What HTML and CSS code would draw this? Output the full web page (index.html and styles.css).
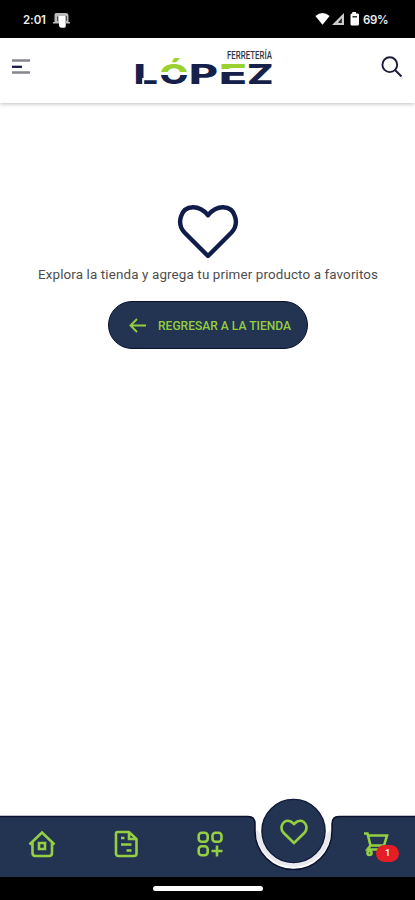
FILE: index.html
```html
<!DOCTYPE html>
<html lang="es">
<head>
<meta charset="utf-8">
<meta name="viewport" content="width=device-width, initial-scale=1">
<title>Favoritos</title>
<link rel="stylesheet" href="styles.css">
</head>
<body>
<div class="app">
  <div class="status">
    <span class="time">2:01</span>
    <svg class="notice" width="18" height="18" viewBox="0 0 18 18"><path d="M3 1H13Q15.500 1 15.500 4V10H17V11.500H13V14Q13 16 11 16H9Q6 16 6 13V11.500H0V10H1.500V3Q1.500 1 3 1Z" fill="#bbb"/><path d="M6 4H12V15H8Q6 15 6 12Z" fill="#fff"/><path d="M4.500 9V4.500M13.500 9V4" stroke="#555" fill="none"/></svg>
    <svg class="signals" width="46" height="15" viewBox="0 0 46 15"><path d="M.4 4Q7.500-1.800 14.600 4L7.500 12.800Z" fill="#fff"/><path d="M17 13L29 1V13Z" fill="#ccc"/><path d="M23.500 10L26.800 6V11H23.500Z" fill="#222"/><path d="M37.500 0H41V1.500H43Q44 1.500 44 3V12Q44 13.500 42.500 13.500H37Q35.500 13.500 35.500 12V3Q35.500 1.500 37 1.500Z" fill="#fff"/><path d="M37.500 4H42V5.500H37.500Z" fill="#333"/></svg>
    <span class="percent">69%</span>
  </div>

  <header class="header">
    <svg class="menu" width="18" height="16" viewBox="0 0 18 16"><path d="M0 1.500H18M0 13.500H18" stroke="#87878c" stroke-width="2.400"/><path d="M0 7.800H10" stroke="#11163d" stroke-width="2.200"/></svg>
    <svg class="logo" width="138" height="40" viewBox="0 0 138 40">
      <defs>
        <linearGradient id="o" gradientUnits="userSpaceOnUse" x1="0" y1="8" x2="0" y2="37">
          <stop offset=".56" stop-color="#9bd12f"/><stop offset=".56" stop-color="#fff"/><stop offset=".66" stop-color="#fff"/><stop offset=".66" stop-color="#171f4b"/>
        </linearGradient>
        <linearGradient id="e" gradientUnits="userSpaceOnUse" x1="0" y1="16" x2="0" y2="36">
          <stop offset=".25" stop-color="#9bd12f"/><stop offset=".25" stop-color="#fff"/><stop offset=".38" stop-color="#fff"/><stop offset=".38" stop-color="#171f4b"/>
        </linearGradient>
      </defs>
      <text class="over" x="92" y="10.500" textLength="45" lengthAdjust="spacingAndGlyphs">FERRETERÍA</text>
      <g class="word">
        <text x="-1.500" y="36" textLength="24.500" lengthAdjust="spacingAndGlyphs">L</text>
        <text x="24.500" y="36" textLength="29" lengthAdjust="spacingAndGlyphs" fill="url(#o)">Ó</text>
        <text x="54" y="36" textLength="29" lengthAdjust="spacingAndGlyphs">P</text>
        <text x="84" y="36" textLength="28" lengthAdjust="spacingAndGlyphs" fill="url(#e)">E</text>
        <text x="112" y="36" textLength="26.500" lengthAdjust="spacingAndGlyphs">Z</text>
      </g>
      <path d="M8.200 30V37" stroke="#fff" stroke-width="2"/>
    </svg>
    <svg class="search" width="22" height="22" viewBox="0 0 22 22" fill="none" stroke="#1b1b3b" stroke-width="1.900"><circle cx="8.800" cy="8.700" r="7.400"/><path d="M14 14L20.500 20.500"/></svg>
  </header>

  <main class="empty">
    <svg class="bigheart" width="62" height="56" viewBox="1 0 62 56"><path d="M32 52L8.500 28.500C.5 20 4 3.500 17 3.300C24 3.200 28 6.500 32 11.200C36 6.500 40 3.200 47 3.300C60 3.500 63.500 20 55.500 28.500Z" fill="none" stroke="#101d4a" stroke-width="4.400" stroke-linejoin="round"/></svg>
    <p class="message"><svg width="342" height="20"><text x="1" y="14.500" textLength="340">Explora la tienda y agrega tu primer producto a favoritos</text></svg></p>
    <a class="back">
      <svg width="17" height="15" viewBox="0 0 17 15" fill="none" stroke="#93cf3c" stroke-width="1.900"><path d="M17 7.500H1.500M8 1L1.500 7.500L8 14"/></svg>
      <svg class="label" width="138" height="18"><text x="0" y="13.500" textLength="133" lengthAdjust="spacingAndGlyphs">REGRESAR A LA TIENDA</text></svg>
    </a>
  </main>

  <nav class="nav">
    <svg class="shape" width="415" height="79" viewBox="0 0 415 79">
      <path d="M0 18H248Q255 18 255 26V33A38.500 38.500 0 0 0 332 33V26Q332 18 339 18H415V79H0Z" fill="#233453"/>
      <path d="M255.500 31A38 38 0 0 0 331.500 31L327 35A34 34 0 0 1 260 35Z" fill="#e9e8ee"/>
      <path d="M0 18.500H248Q255 18.500 255 26V33A38.500 38.500 0 0 0 332 33V26Q332 18.500 339 18.500H415" fill="none" stroke="#0b122d" stroke-width="1.500"/>
      <circle cx="293.500" cy="33" r="31.600" fill="#233453" stroke="#101a3b" stroke-width="1.400"/>
    </svg>
    <div class="items">
      <svg width="28" height="28" viewBox="0 0 28 28"><path d="M1.500 14.500L14 2.500L26.500 14.500M4.500 12V23Q4.500 26 7.500 26H21Q24 26 24 23V12M11 13H17V19H11Z"/></svg>
      <svg width="28" height="28" viewBox="0 0 28 28"><path d="M5.500 2H17L24.500 9V23.500Q24.500 26 22 26H6.500Q4 26 4 23.500V4Q4 2 5.500 2ZM17 2V9H24M9 8H12.500M9 14.500H19.500M14.500 20.500H19.500"/></svg>
      <svg width="28" height="28" viewBox="0 0 28 28"><rect x="2.700" y="2.700" width="9" height="9" rx="3"/><rect x="16.500" y="2.700" width="9" height="9" rx="3"/><rect x="2.700" y="16.300" width="9" height="9" rx="3"/><path d="M21 15.500V26.500M15.500 21H26.500"/></svg>
      <svg class="fav" width="28" height="26" viewBox="0 0 28 26"><path d="M14 24L3.500 13.800C-1 8.500 3 1.800 8 1.800C11 1.800 12.500 3.500 14 5C15.500 3.500 17 1.800 20 1.800C25 1.800 29 8.500 24.500 13.800Z"/></svg>
      <div class="cart">
        <svg width="28" height="28" viewBox="0 0 28 28"><path d="M2 3.500H5.500L8.500 15.500H22L25 5.500H6M8.500 15.500L5.500 19.500H20"/><circle cx="7.500" cy="23" r="2"/><circle cx="20" cy="23" r="2"/></svg>
        <span class="badge">1</span>
      </div>
    </div>
  </nav>
  <div class="system"><span class="grip"></span></div>
</div>
</body>
</html>
```
FILE: styles.css
```css
* { box-sizing: border-box; }
body { margin: 0; background: #fff; font-family: Roboto, sans-serif; }
svg { display: block; flex: none; }
.app { width: 415px; height: 900px; display: flex; flex-direction: column; overflow: hidden; }
.status { height: 38px; flex: none; background: #000; color: #eee; display: flex; align-items: center; padding: 1px 26px 0 23px; font: 600 11.5px Inter, sans-serif; }
.time { width: 30px; letter-spacing: -.1px; }
.notice { margin-top: 3px; }
.signals { margin-left: auto; }
.percent { width: 26px; margin-left: 2px; letter-spacing: -.3px; }
.header { height: 65px; flex: none; display: flex; align-items: flex-start; justify-content: space-between; padding: 10px 12px 0; box-shadow: 0 1px 4px rgba(0, 0, 0, .25); }
.menu { margin-top: 11px; }
.logo { margin-right: 4px; overflow: visible; }
.search { margin: 8px 0 0; }
.over { font: 500 10.5px Roboto, sans-serif; fill: #343746; }
.word { font: 800 27.5px Inter, sans-serif; fill: #171f4b; }
.empty { flex: 1; display: flex; flex-direction: column; align-items: center; padding-top: 101px; }
.bigheart { margin-left: 1px; }
.message { margin: 4px 0 0 1px; font-size: 13.4px; fill: #4d4d4d; }
.back { display: flex; align-items: center; gap: 12px; width: 200px; height: 48px; margin-top: 17px; margin-left: 1px; padding-left: 20px; border: 1px solid #09122f; border-radius: 24px; background: #233453; }
.label { font-size: 12.3px; font-weight: 500; fill: #93cf3c; }
.nav { height: 79px; flex: none; display: grid; }
.shape, .items { grid-area: 1 / 1; }
.items { display: grid; grid-template-columns: repeat(5, 84px); width: 420px; justify-items: center; align-items: start; padding-top: 32px; fill: none; stroke: #94cf42; stroke-width: 2.6; }
.fav { margin-top: -11px; }
.cart { position: relative; margin-right: 4px; }
.badge { position: absolute; left: 14px; top: 15px; width: 23px; height: 17px; border-radius: 9px; background: #e51e25; color: #fff; font: 700 9px/17px Roboto, sans-serif; text-align: center; }
.system { height: 23px; flex: none; background: #000; display: flex; justify-content: center; padding-top: 9px; }
.grip { width: 110px; height: 5px; border-radius: 3px; background: #fff; }
```
